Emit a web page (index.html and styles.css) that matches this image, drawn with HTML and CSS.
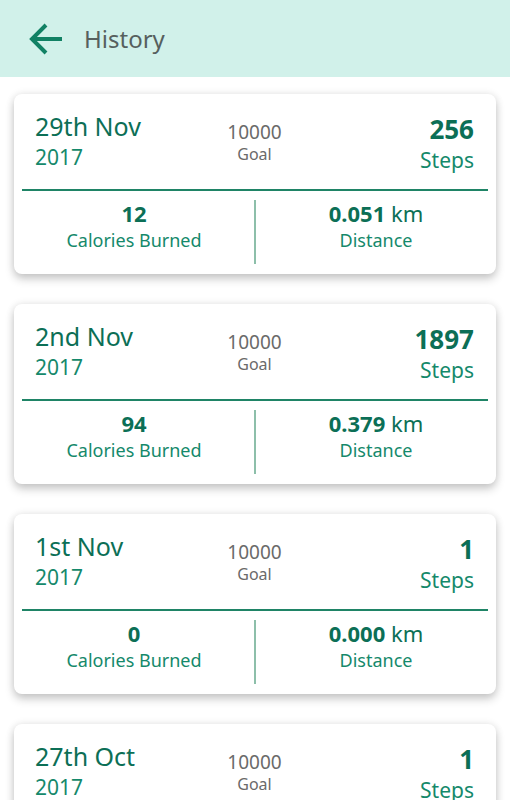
FILE: index.html
```html
<!DOCTYPE html>
<html lang="en">
<head>
    <meta charset="UTF-8">
    <meta name="viewport" content="width=device-width, initial-scale=1.0">
    <title>History</title>
    <link rel="stylesheet" href="styles.css">
</head>
<body>
    <header class="topbar">
        <button class="back-btn" aria-label="Back">
            <svg width="36" height="36" viewBox="0 0 36 36">
                <path d="M4 18H34 M18 4L4 18L18 32" fill="none" stroke="#118164" stroke-width="4"/>
            </svg>
        </button>
        <h1>History</h1>
    </header>

    <main class="history">
        <div class="card">
            <div class="card-top">
                <div class="day">
                    <div class="day-date">29th Nov</div>
                    <div class="day-year">2017</div>
                </div>
                <div class="goal">
                    <div class="goal-value">10000</div>
                    <div class="goal-label">Goal</div>
                </div>
                <div class="steps">
                    <div class="steps-value">256</div>
                    <div class="steps-label">Steps</div>
                </div>
            </div>
            <div class="card-rule"></div>
            <div class="card-bottom">
                <div class="stat">
                    <div class="stat-value">12</div>
                    <div class="stat-label">Calories Burned</div>
                </div>
                <div class="stat-sep"></div>
                <div class="stat">
                    <div class="stat-value">0.051 <span>km</span></div>
                    <div class="stat-label">Distance</div>
                </div>
            </div>
        </div>

        <div class="card">
            <div class="card-top">
                <div class="day">
                    <div class="day-date">2nd Nov</div>
                    <div class="day-year">2017</div>
                </div>
                <div class="goal">
                    <div class="goal-value">10000</div>
                    <div class="goal-label">Goal</div>
                </div>
                <div class="steps">
                    <div class="steps-value">1897</div>
                    <div class="steps-label">Steps</div>
                </div>
            </div>
            <div class="card-rule"></div>
            <div class="card-bottom">
                <div class="stat">
                    <div class="stat-value">94</div>
                    <div class="stat-label">Calories Burned</div>
                </div>
                <div class="stat-sep"></div>
                <div class="stat">
                    <div class="stat-value">0.379 <span>km</span></div>
                    <div class="stat-label">Distance</div>
                </div>
            </div>
        </div>

        <div class="card">
            <div class="card-top">
                <div class="day">
                    <div class="day-date">1st Nov</div>
                    <div class="day-year">2017</div>
                </div>
                <div class="goal">
                    <div class="goal-value">10000</div>
                    <div class="goal-label">Goal</div>
                </div>
                <div class="steps">
                    <div class="steps-value">1</div>
                    <div class="steps-label">Steps</div>
                </div>
            </div>
            <div class="card-rule"></div>
            <div class="card-bottom">
                <div class="stat">
                    <div class="stat-value">0</div>
                    <div class="stat-label">Calories Burned</div>
                </div>
                <div class="stat-sep"></div>
                <div class="stat">
                    <div class="stat-value">0.000 <span>km</span></div>
                    <div class="stat-label">Distance</div>
                </div>
            </div>
        </div>

        <div class="card">
            <div class="card-top">
                <div class="day">
                    <div class="day-date">27th Oct</div>
                    <div class="day-year">2017</div>
                </div>
                <div class="goal">
                    <div class="goal-value">10000</div>
                    <div class="goal-label">Goal</div>
                </div>
                <div class="steps">
                    <div class="steps-value">1</div>
                    <div class="steps-label">Steps</div>
                </div>
            </div>
            <div class="card-rule"></div>
            <div class="card-bottom">
                <div class="stat">
                    <div class="stat-value">0</div>
                    <div class="stat-label">Calories Burned</div>
                </div>
                <div class="stat-sep"></div>
                <div class="stat">
                    <div class="stat-value">0.000 <span>km</span></div>
                    <div class="stat-label">Distance</div>
                </div>
            </div>
        </div>
    </main>
</body>
</html>
```

FILE: styles.css
```css
body {
    margin: 0;
    font-family: "Noto Sans", "Open Sans", sans-serif;
    background-color: #ffffff;
    height: 800px;
    overflow: hidden;
}

/* Barra superior */
.topbar {
    display: flex;
    align-items: center;
    height: 77px;
    background-color: #d1f1ea;
}

.back-btn {
    display: flex;
    margin-left: 28px;
    padding: 0;
    background: none;
    border: none;
    cursor: pointer;
}

.topbar h1 {
    margin: 0 0 0 20px;
    font-size: 24px;
    font-weight: normal;
    line-height: 30px;
    color: #56605e;
}

/* Lista de dias */
.history {
    padding-top: 17px;
}

.card {
    margin: 0 14px 30px;
    height: 180px;
    background-color: white;
    border-radius: 8px;
    box-shadow: 0px 5px 10px rgba(0, 0, 0, 0.2), 0px 0px 8px rgba(0, 0, 0, 0.09);
}

.card-top {
    display: grid;
    grid-template-columns: 1fr auto 1fr;
    height: 95px;
    padding: 17px 22px 0 21px;
    box-sizing: border-box;
}

.day-date {
    font-size: 25px;
    line-height: 30px;
    color: #0c6f56;
}

.day-year {
    font-size: 21px;
    line-height: 33px;
    color: #15896b;
}

.goal {
    padding-top: 9px;
    text-align: center;
    color: #6a6a6a;
}

.goal-value {
    font-size: 19px;
    line-height: 24px;
}

.goal-label {
    font-size: 16px;
    line-height: 20px;
}

.steps {
    padding-top: 3px;
    text-align: right;
}

.steps-value {
    font-size: 26px;
    font-weight: bold;
    line-height: 30px;
    color: #0c6f56;
}

.steps-label {
    font-size: 21px;
    line-height: 32px;
    color: #15896b;
}

.card-rule {
    height: 2px;
    margin: 0 8px;
    background-color: #1f8466;
}

.card-bottom {
    display: grid;
    grid-template-columns: 1fr 2px 1fr;
    padding-top: 9px;
}

.stat {
    text-align: center;
}

.stat-value {
    font-size: 22px;
    font-weight: bold;
    line-height: 26px;
    color: #0c6f56;
}

.stat-value span {
    font-weight: normal;
}

.stat-label {
    font-size: 18px;
    line-height: 29px;
    color: #15896b;
}

.stat-sep {
    height: 64px;
    background-color: #8dbfaa;
}
```
